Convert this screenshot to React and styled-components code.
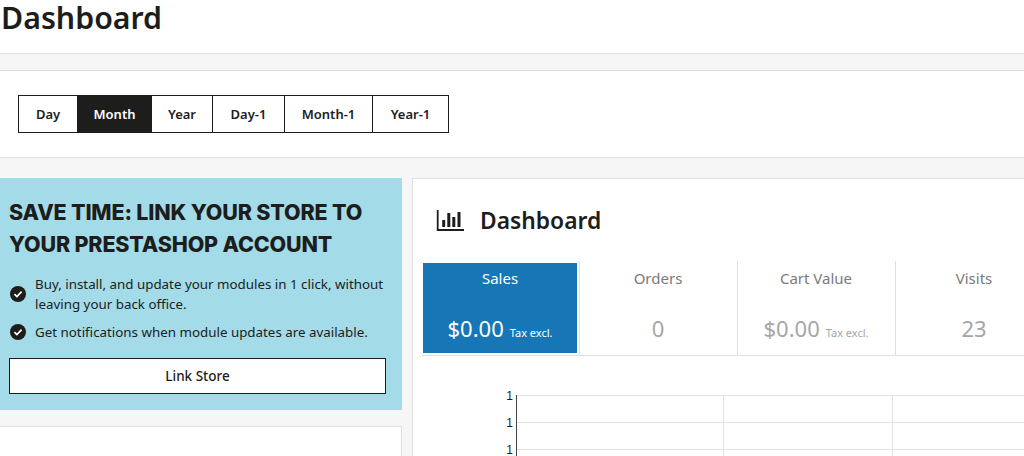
import React from 'react';
import styled, { createGlobalStyle } from 'styled-components';

const periods = [
  { label: 'Day', width: 58 },
  { label: 'Month', width: 74, active: true },
  { label: 'Year', width: 61 },
  { label: 'Day-1', width: 72 },
  { label: 'Month-1', width: 88 },
  { label: 'Year-1', width: 76 },
];

const stats = [
  { label: 'Sales', value: '$0.00', tax: true, active: true },
  { label: 'Orders', value: '0' },
  { label: 'Cart Value', value: '$0.00', tax: true },
  { label: 'Visits', value: '23' },
];

const CheckIcon = () => (
  <Check viewBox="0 0 16 16">
    <circle cx="8" cy="8" r="8" fill="#1d1d1b" />
    <path d="M4.4 8.2l2.5 2.4 4.7-4.9" fill="none" stroke="#fff" strokeWidth="1.7" />
  </Check>
);

const ChartIcon = () => (
  <svg width="28" height="21" viewBox="0 0 28 21">
    <path d="M1.7 0v20h26.3" fill="none" stroke="#1d1d1b" strokeWidth="1.8" />
    <path d="M7.7 10v7M12.8 3v14M17.8 7v10M23 2v15" fill="none" stroke="#1d1d1b" strokeWidth="3" />
  </svg>
);

const Chart = () => (
  <svg width="612" height="68" viewBox="0 0 612 68">
    <ChartLines>
      <path d="M104 6.5h508M104 33.5h508M104 60.5h508M310.5 6v62M479.5 6v62" />
    </ChartLines>
    <path d="M103.5 6v62" stroke="#444" fill="none" />
    <ChartTick x="100" y="11">1</ChartTick>
    <ChartTick x="100" y="38">1</ChartTick>
    <ChartTick x="100" y="65">1</ChartTick>
  </svg>
);

const App = () => {
  return (
    <Page>
      <GlobalStyle />
      <Header>
        <PageTitle>Dashboard</PageTitle>
      </Header>
      <Strip />
      <Toolbar>
        <Periods>
          {periods.map((period) => (
            <Period key={period.label} $width={period.width} $active={period.active}>
              {period.label}
            </Period>
          ))}
        </Periods>
      </Toolbar>
      <Content>
        <Side>
          <Banner>
            <BannerTitle>SAVE TIME: LINK YOUR STORE TO YOUR PRESTASHOP ACCOUNT</BannerTitle>
            <Perks>
              <Perk>
                <CheckIcon />
                <span>Buy, install, and update your modules in 1 click, without leaving your back office.</span>
              </Perk>
              <Perk>
                <CheckIcon />
                <span>Get notifications when module updates are available.</span>
              </Perk>
            </Perks>
            <LinkButton>Link Store</LinkButton>
          </Banner>
          <SideCard />
        </Side>
        <Panel>
          <PanelHead>
            <ChartIcon />
            <PanelTitle>Dashboard</PanelTitle>
          </PanelHead>
          <Stats>
            {stats.map((stat) => (
              <Stat key={stat.label}>
                <StatInner $active={stat.active}>
                  <StatLabel $active={stat.active}>{stat.label}</StatLabel>
                  <StatValue>
                    {stat.value}
                    {stat.tax && <Tax>Tax excl.</Tax>}
                  </StatValue>
                </StatInner>
              </Stat>
            ))}
          </Stats>
          <ChartArea>
            <Chart />
          </ChartArea>
        </Panel>
      </Content>
    </Page>
  );
};

const GlobalStyle = createGlobalStyle`
  html, body {
    margin: 0;
    overflow: hidden;
    background: #fff;
  }
  body {
    font-family: "Noto Sans", "Open Sans", sans-serif;
    color: #1d1d1b;
  }
`;

const Page = styled.div`
  width: 1024px;
  height: 456px;
  overflow: hidden;
  display: flex;
  flex-direction: column;
  background: #f6f6f6;
`;

const Header = styled.header`
  height: 53px;
  flex: none;
  background: #fff;
  border-bottom: 1px solid #dfdfdf;
`;

const PageTitle = styled.h1`
  margin: 0;
  padding-left: 1px;
  font-size: 30.3px;
  line-height: 36px;
  font-weight: 600;
`;

const Strip = styled.div`
  height: 16px;
  flex: none;
  border-bottom: 1px solid #dfdfdf;
`;

const Toolbar = styled.div`
  height: 87px;
  flex: none;
  box-sizing: border-box;
  padding: 24px 18px 0;
  background: #fff;
  border-bottom: 1px solid #dfdfdf;
`;

const Periods = styled.div`
  display: inline-flex;
  height: 38px;
  box-sizing: border-box;
  border: 1px solid #1d1d1b;
`;

const Period = styled.div`
  width: ${(props) => props.$width}px;
  box-sizing: border-box;
  display: flex;
  align-items: center;
  justify-content: center;
  font-size: 13px;
  font-weight: 600;
  color: ${(props) => (props.$active ? '#fff' : '#1d1d1b')};
  background: ${(props) => (props.$active ? '#1d1d1b' : '#fff')};
  border-left: 1px solid #1d1d1b;
  &:first-child {
    border-left: 0;
  }
`;

const Content = styled.div`
  display: flex;
  align-items: flex-start;
  gap: 10px;
  padding-top: 20px;
`;

const Side = styled.aside`
  width: 402px;
  flex: none;
`;

const Banner = styled.section`
  height: 232px;
  box-sizing: border-box;
  padding: 18px 10px 0 9px;
  background: #a4dbe8;
`;

const BannerTitle = styled.h2`
  margin: 0;
  max-width: 380px;
  font-family: Inter, "Noto Sans", sans-serif;
  font-size: 21.5px;
  line-height: 32px;
  font-weight: 800;
  letter-spacing: -0.17px;
`;

const Perks = styled.ul`
  list-style: none;
  margin: 14px 0 0;
  padding: 0;
  display: flex;
  flex-direction: column;
  gap: 8px;
`;

const Perk = styled.li`
  display: flex;
  align-items: center;
  gap: 9px;
  padding-left: 1px;
  font-size: 13.35px;
  line-height: 20px;
`;

const Check = styled.svg`
  width: 16px;
  height: 16px;
  flex: none;
`;

const LinkButton = styled.button`
  display: block;
  width: 377px;
  height: 36px;
  margin-top: 16px;
  background: #fff;
  border: 1px solid #1d1d1b;
  color: #1d1d1b;
  font-family: inherit;
  font-size: 13.5px;
  font-weight: 500;
`;

const SideCard = styled.div`
  height: 60px;
  margin-top: 16px;
  box-sizing: border-box;
  background: #fff;
  border: 1px solid #dfdfdf;
  border-left: 0;
`;

const Panel = styled.section`
  width: 660px;
  flex: none;
  box-sizing: border-box;
  height: 300px;
  background: #fff;
  border: 1px solid #dfdfdf;
`;

const PanelHead = styled.div`
  height: 82px;
  box-sizing: border-box;
  padding: 31px 0 0 23px;
  display: flex;
  align-items: flex-start;
  gap: 16px;
`;

const PanelTitle = styled.h3`
  margin: -5px 0 0;
  font-size: 22.8px;
  line-height: 32px;
  font-weight: 600;
`;

const Stats = styled.div`
  display: flex;
  margin-left: 9px;
  height: 95px;
  box-sizing: border-box;
  border-bottom: 1px solid #dfdfdf;
`;

const Stat = styled.div`
  width: 158px;
  flex: none;
  box-sizing: border-box;
  padding: 2px 2px 2px 1px;
  border-right: 1px solid #dfdfdf;
`;

const StatInner = styled.div`
  height: 90px;
  display: flex;
  flex-direction: column;
  align-items: center;
  box-sizing: border-box;
  padding-top: 5px;
  color: ${(props) => (props.$active ? '#fff' : '#a6a6a6')};
  background: ${(props) => (props.$active ? '#1777b6' : '#fff')};
`;

const StatLabel = styled.div`
  font-size: 15px;
  line-height: 20px;
  color: ${(props) => (props.$active ? '#fff' : '#7a7a7a')};
`;

const StatValue = styled.div`
  margin-top: 25px;
  font-size: 22px;
  line-height: 30px;
  white-space: nowrap;
`;

const Tax = styled.small`
  margin-left: 6px;
  font-size: 11px;
`;

const ChartArea = styled.div`
  padding-top: 33px;
`;

const ChartLines = styled.g`
  fill: none;
  stroke: #e2e2e2;
`;

const ChartTick = styled.text`
  font-family: "Liberation Sans", Arial, sans-serif;
  font-size: 12px;
  fill: #1d1d1b;
  text-anchor: end;
`;

export default App;
